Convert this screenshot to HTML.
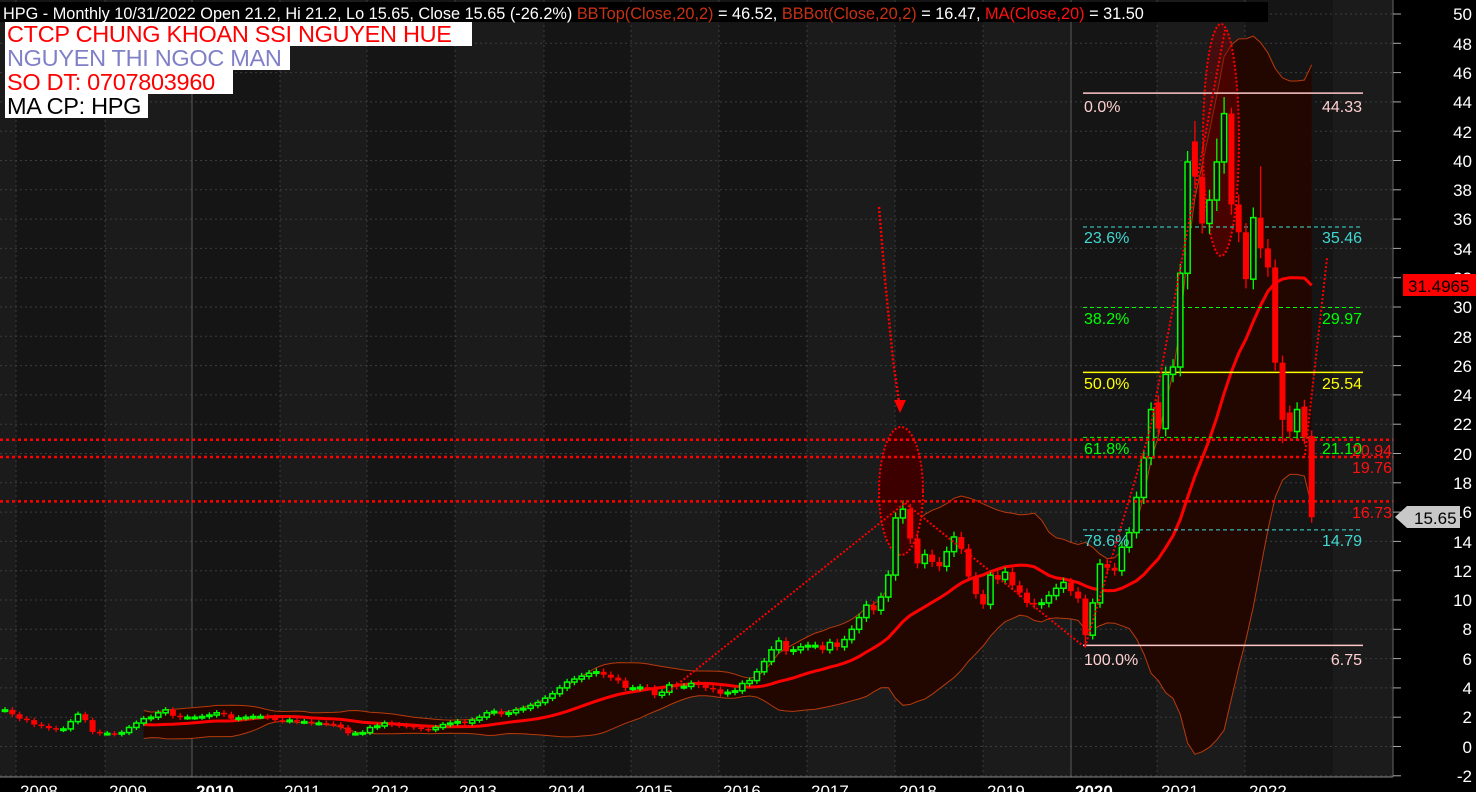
<!DOCTYPE html>
<html><head><meta charset="utf-8">
<style>
html,body{margin:0;padding:0;background:#000;width:1476px;height:792px;overflow:hidden}
svg{display:block;font-family:"Liberation Sans",Arial,sans-serif}
.lbl{position:absolute;left:5px;background:#fff;font-family:"Liberation Sans",Arial,sans-serif;font-size:23.5px;line-height:24px;height:24px;padding:0 0 0 2px;white-space:nowrap;letter-spacing:-0.3px;overflow:hidden}
</style></head>
<body>
<div style="position:relative;width:1476px;height:792px">
<svg id="s" width="1476" height="792" viewBox="0 0 1476 792" xmlns="http://www.w3.org/2000/svg">
<rect x="0" y="0" width="1476" height="792" fill="#000"/>
<g id="bg"></g>
<g id="grid"></g>
<g id="bands"></g>
<g id="over"></g>
<g id="candles"></g>
<g id="top"></g>
<g font-size="16">
<text x="1084" y="112" fill="#ffd0d0">0.0%</text><text x="1362" y="112" fill="#ffd0d0" text-anchor="end">44.33</text>
<text x="1084" y="243" fill="#40d8d0">23.6%</text><text x="1362" y="243" fill="#40d8d0" text-anchor="end">35.46</text>
<text x="1084" y="324" fill="#00ff00">38.2%</text><text x="1362" y="324" fill="#00ff00" text-anchor="end">29.97</text>
<text x="1084" y="389" fill="#ffff00">50.0%</text><text x="1362" y="389" fill="#ffff00" text-anchor="end">25.54</text>
<text x="1084" y="454" fill="#00ff00">61.8%</text><text x="1362" y="454" fill="#00ff00" text-anchor="end">21.10</text>
<text x="1084" y="546" fill="#40d8d0">78.6%</text><text x="1362" y="546" fill="#40d8d0" text-anchor="end">14.79</text>
<text x="1084" y="665" fill="#ffd0d0">100.0%</text><text x="1362" y="665" fill="#ffd0d0" text-anchor="end">6.75</text>
<text x="1392" y="456" fill="#ff1010" text-anchor="end">20.94</text>
<text x="1392" y="473" fill="#ff1010" text-anchor="end">19.76</text>
<text x="1392" y="518" fill="#ff1010" text-anchor="end">16.73</text>
</g>
<rect x="1393" y="0" width="83" height="792" fill="#000"/>
<line x1="1393" y1="0" x2="1393" y2="777" stroke="#666" stroke-width="1"/>
<g id="ticks"></g>
<g font-size="17" fill="#fff" text-anchor="end">
<text x="1472" y="20">50</text><text x="1472" y="50">48</text><text x="1472" y="79">46</text><text x="1472" y="108">44</text><text x="1472" y="138">42</text><text x="1472" y="167">40</text><text x="1472" y="196">38</text><text x="1472" y="225">36</text><text x="1472" y="255">34</text><text x="1472" y="284">32</text><text x="1472" y="313">30</text><text x="1472" y="343">28</text><text x="1472" y="372">26</text><text x="1472" y="401">24</text><text x="1472" y="430">22</text><text x="1472" y="460">20</text><text x="1472" y="489">18</text><text x="1472" y="518">16</text><text x="1472" y="548">14</text><text x="1472" y="577">12</text><text x="1472" y="606">10</text><text x="1472" y="635">8</text><text x="1472" y="665">6</text><text x="1472" y="694">4</text><text x="1472" y="723">2</text><text x="1472" y="753">0</text><text x="1472" y="782">-2</text>
</g>
<rect x="1403" y="274" width="73" height="22" fill="#ff0000"/>
<text x="1408" y="292" font-size="17" fill="#000">31.4965</text>
<polygon points="1395,517 1407,506 1460,506 1460,528 1407,528" fill="#c8c8c8"/>
<text x="1414" y="524" font-size="17" fill="#000">15.65</text>
<rect x="0" y="777" width="1393" height="15" fill="#000"/>
<line x1="0" y1="777" x2="1393" y2="777" stroke="#888"/>
<g font-size="17" fill="#fff">
<text x="20" y="797">2008</text><text x="109" y="797">2009</text><text x="196" y="797" font-weight="bold">2010</text><text x="284" y="797">2011</text><text x="371" y="797">2012</text><text x="459" y="797">2013</text><text x="548" y="797">2014</text><text x="635" y="797">2015</text><text x="723" y="797">2016</text><text x="811" y="797">2017</text><text x="899" y="797">2018</text><text x="987" y="797">2019</text><text x="1075" y="797" font-weight="bold">2020</text><text x="1161" y="797">2021</text><text x="1249" y="797">2022</text>
</g>
<rect x="0" y="2" width="1268" height="20" fill="#000"/>
<text x="3" y="19" font-size="16.3" fill="#fff">HPG - Monthly 10/31/2022 Open 21.2, Hi 21.2, Lo 15.65, Close 15.65 (-26.2%) <tspan fill="#c83214">BBTop(Close,20,2)</tspan> = 46.52, <tspan fill="#c83214">BBBot(Close,20,2)</tspan> = 16.47, <tspan fill="#ff1010">MA(Close,20)</tspan> = 31.50</text>
</svg>
<div class="lbl" style="top:22px;color:#ff0000;width:465px">CTCP CHUNG KHOAN SSI NGUYEN HUE</div>
<div class="lbl" style="top:46px;color:#8080c8;width:283px">NGUYEN THI NGOC MAN</div>
<div class="lbl" style="top:70px;color:#ff0000;width:226px">SO DT: 0707803960</div>
<div class="lbl" style="top:94px;color:#000;width:141px">MA CP: HPG</div>
</div>
<script>
var NS="http://www.w3.org/2000/svg";
function el(p,t,a){var e=document.createElementNS(NS,t);for(var k in a)e.setAttribute(k,a[k]);document.getElementById(p).appendChild(e);return e;}
function Y(v){return 14+(50-v)*14.65;}
function X(m){return 19.6+m*7.3;}
var W=1393,H=777;
var ticks=[16,105,192,280,367,455,544,631,719,807,895,983,1071,1157,1245,1333];
el("bg","rect",{x:0,y:0,width:W,height:H,fill:"#1b1b1b"});
for(var i=0;i<ticks.length-1;i++){ if(i%2==0) el("bg","rect",{x:ticks[i],y:0,width:ticks[i+1]-ticks[i],height:H,fill:"#151515"}); }
for(var v=-2;v<=50;v+=2){var y=Y(v);el("grid","line",{x1:0,y1:y,x2:W,y2:y,stroke:"#3c3c3c","stroke-dasharray":"2 3"});el("ticks","line",{x1:1393,y1:y,x2:1401,y2:y,stroke:"#aaa"});}
for(var i=0;i<15;i++){var x=ticks[i];var solid=(i==2||i==12);el("grid","line",{x1:x,y1:0,x2:x,y2:H,stroke:solid?"#5a5a5a":"#3c3c3c","stroke-dasharray":solid?"":"2 3"});el("ticks","line",{x1:x,y1:777,x2:x,y2:784,stroke:"#aaa"});}
var C=[2.5,2.2,
1.9,1.8,1.5,1.4,1.25,1.15,1.2,1.7,2.2,1.8,1.0,0.9,
0.9,0.85,0.95,1.3,1.6,1.9,2.0,2.3,2.5,2.1,2.0,2.0,
2.0,2.05,2.15,2.3,2.2,1.9,1.95,2.0,2.05,2.05,2.0,1.8,
1.75,1.8,1.7,1.7,1.6,1.6,1.55,1.5,1.3,0.9,0.9,0.95,
1.3,1.4,1.6,1.5,1.45,1.4,1.3,1.2,1.15,1.3,1.5,1.6,
1.7,1.6,1.8,2.0,2.3,2.4,2.2,2.3,2.5,2.6,2.8,3.0,
3.3,3.6,4.0,4.4,4.6,4.8,5.0,5.1,4.9,4.7,4.5,4.0,
4.0,4.05,4.0,3.5,3.7,4.2,4.1,4.1,4.3,4.2,4.0,3.9,
3.6,3.7,3.8,4.3,4.5,5.1,5.8,6.6,7.2,6.5,6.6,6.8,
6.9,6.9,6.6,7.1,6.8,7.3,8.0,8.8,9.65,9.3,10.2,11.7,
15.6,16.2,14.2,12.5,13.1,12.6,12.3,13.3,14.3,13.5,11.6,10.4,
9.7,11.7,11.4,11.9,11.0,10.5,9.8,9.7,9.8,10.3,10.8,11.2,
10.6,10.1,7.6,9.8,12.45,12.2,12.0,13.6,14.6,17.0,19.7,23.0,
21.7,25.4,25.9,32.3,39.9,38.9,35.7,37.3,39.9,43.2,37.0,35.1,
31.9,36.1,34.0,32.7,26.2,22.3,21.5,23.0,21.1,15.65];
var N=C.length;
function idx(y,mo){return (y-2008)*12+(mo-1)+2;}
var O={};O[idx(2021,1)]=23.5;O[idx(2021,6)]=41.3;O[idx(2022,10)]=21.2;O[idx(2022,9)]=23.2;O[idx(2022,7)]=22.8;O[idx(2020,2)]=10.57;
var Hh={};Hh[idx(2021,10)]=44.33;Hh[idx(2021,6)]=42.7;Hh[idx(2018,2)]=16.8;Hh[idx(2021,9)]=41.5;Hh[idx(2021,11)]=43.6;Hh[idx(2022,3)]=39.6;
var Ll={};Ll[idx(2020,3)]=6.75;Ll[idx(2022,6)]=20.7;Ll[idx(2021,5)]=31.2;
var ma=[],up=[],lo=[];
for(var i=19;i<N;i++){var s=0;for(var j=i-19;j<=i;j++)s+=C[j];var m=s/20;var q=0;for(var j=i-19;j<=i;j++)q+=(C[j]-m)*(C[j]-m);var sd=Math.sqrt(q/20);ma.push([X(i-2),Y(m)]);up.push([X(i-2),Y(m+2*sd)]);lo.push([X(i-2),Y(m-2*sd)]);}
function pts(a){return a.map(function(p){return p[0].toFixed(1)+","+p[1].toFixed(1)}).join(" ");}
el("bands","polygon",{points:pts(up)+" "+pts(lo.slice().reverse()),fill:"#220700"});
el("bands","polyline",{points:pts(up),fill:"none",stroke:"#b83a0a","stroke-width":1});
el("bands","polyline",{points:pts(lo),fill:"none",stroke:"#b83a0a","stroke-width":1});
var R="#ff0000";
el("over","ellipse",{cx:901,cy:491,rx:22,ry:64,fill:"#3c0000",stroke:R,"stroke-width":2,"stroke-dasharray":"2 2"});
el("over","ellipse",{cx:1221,cy:140,rx:18,ry:116,fill:"rgba(120,0,0,0.45)",stroke:R,"stroke-width":2,"stroke-dasharray":"2 2"});
el("over","polyline",{points:pts(ma),fill:"none",stroke:R,"stroke-width":3});
function fl(v,c,d){el("over","line",{x1:1083,y1:Y(v),x2:1363,y2:Y(v),stroke:c,"stroke-width":d?1:1.5,"stroke-dasharray":d?"4 3":""});}
fl(44.6,"#ffc8c8",0);fl(35.46,"#40e0d8",1);fl(29.97,"#00ff00",1);fl(25.54,"#ffff00",0);fl(21.1,"#00ff00",1);fl(14.79,"#40e0d8",1);fl(6.9,"#ffc8c8",0);
[20.94,19.76,16.73].forEach(function(v){el("top","line",{x1:0,y1:Y(v),x2:W,y2:Y(v),stroke:R,"stroke-width":2.5,"stroke-dasharray":"3 3"});});
function dl(p,w){el("top","polyline",{points:p,fill:"none",stroke:R,"stroke-width":w||2,"stroke-dasharray":"2 2"});}
dl("668,692 905,503");dl("905,503 1082,645");dl("1085,647 1150,430 1225,30");dl("1305,455 1327,258");
dl("879,207 885,280 893,360 899,402",2.5);
el("top","polygon",{points:"894,400 906,400 900,413",fill:R});
for(var i=0;i<N;i++){var c=C[i];var o=(O[i]!==undefined)?O[i]:(i>0?C[i-1]:c);var hi=Math.max(o,c)+0.15+Math.abs(c)*0.015;var lw=Math.min(o,c)-0.15-Math.abs(c)*0.015;if(Hh[i])hi=Hh[i];if(Ll[i])lw=Ll[i];
var x=X(i-2);var up2=c>=o;var col=up2?"#00ff00":"#ff0000";
el("candles","line",{x1:x,y1:Y(hi),x2:x,y2:Y(lw),stroke:col,"stroke-width":1.3});
var yt=Y(Math.max(o,c)),yb=Y(Math.min(o,c));var h=Math.max(yb-yt,1.5);
if(up2)el("candles","rect",{x:x-2.6,y:yt,width:5.2,height:h,fill:"#111",stroke:col,"stroke-width":1.5});
else el("candles","rect",{x:x-3,y:yt,width:6,height:h,fill:col});}
</script>
</body></html>
